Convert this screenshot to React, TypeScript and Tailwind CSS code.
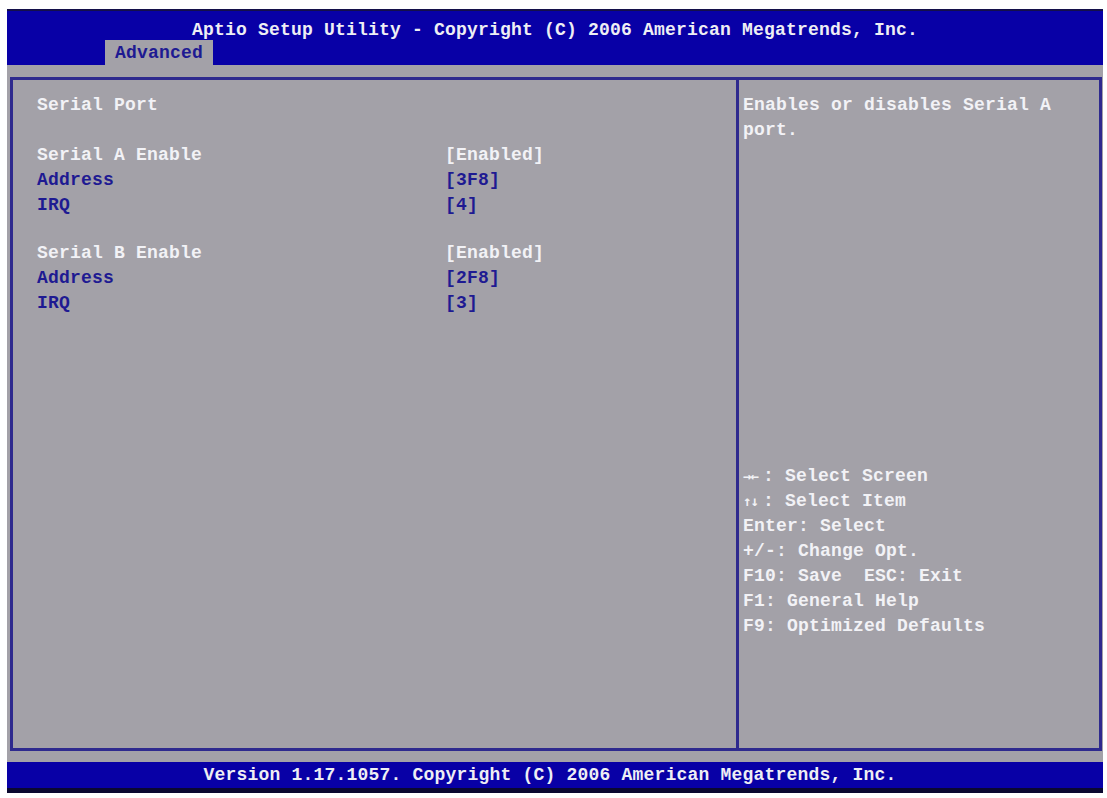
import React from 'react';

const rows = [
  { label: 'Serial A Enable', value: '[Enabled]', sub: false },
  { label: 'Address', value: '[3F8]', sub: true },
  { label: 'IRQ', value: '[4]', sub: true },
  null,
  { label: 'Serial B Enable', value: '[Enabled]', sub: false },
  { label: 'Address', value: '[2F8]', sub: true },
  { label: 'IRQ', value: '[3]', sub: true },
];

const keys = [
  { k: '\u2192\u2190', t: ': Select Screen' },
  { k: '\u2191\u2193', t: ': Select Item' },
  { k: '', t: 'Enter: Select' },
  { k: '', t: '+/-: Change Opt.' },
  { k: '', t: 'F10: Save  ESC: Exit' },
  { k: '', t: 'F1: General Help' },
  { k: '', t: 'F9: Optimized Defaults' },
];

const App: React.FC = () => {
  return (
    <div
      className="w-[1107px] h-[798px] bg-white pl-[7px] pt-[9px] text-[18px] font-bold tracking-[0.2px]"
      style={{ fontFamily: '"Liberation Mono", "DejaVu Sans Mono", monospace' }}
    >
      <div className="w-[1096px] h-[784px] flex flex-col bg-[#a3a1a8]">
        {/* header */}
        <div className="h-[56px] bg-[#0800a6] border-t-2 border-[#14104a] flex flex-col">
          <div className="h-[29px] flex items-end justify-center text-[#eeeef4] leading-[20px] whitespace-pre">
            Aptio Setup Utility - Copyright (C) 2006 American Megatrends, Inc.
          </div>
          <div className="flex-1 flex items-end pl-[98px]">
            <div className="w-[108px] h-[25px] bg-[#a3a1a8] text-[#1e1a92] flex items-center justify-center leading-none">
              Advanced
            </div>
          </div>
        </div>

        {/* body */}
        <div className="flex-1 pt-[12px] pb-[11px] pl-[3px] pr-[1px]">
          <div className="h-full flex border-[3px] border-[#2e2a8e]">
            <div className="w-[726px] border-r-[3px] border-[#2e2a8e] pl-[24px] pt-[13px] leading-[25px] text-[#f2f2f6]">
              <div>Serial Port</div>
              <div className="h-[25px]" />
              {rows.map((r, i) =>
                r ? (
                  <div key={i} className="flex">
                    <div className={`w-[408px] ${r.sub ? 'text-[#1e1a92]' : ''}`}>{r.label}</div>
                    <div className={r.sub ? 'text-[#1e1a92]' : ''}>{r.value}</div>
                  </div>
                ) : (
                  <div key={i} className="h-[23px]" />
                )
              )}
            </div>
            <div className="flex-1 flex flex-col justify-between pl-[4px] pt-[13px] pb-[109px] leading-[25px] text-[#f2f2f6]">
              <div>
                <div>Enables or disables Serial A</div>
                <div>port.</div>
              </div>
              <div className="whitespace-pre">
                {keys.map((row) => (
                  <div key={row.t}>
                    {row.k && (
                      <span className="inline-block w-[20px] tracking-[-1px] text-[14px]" style={{ fontFamily: '"DejaVu Sans Mono", monospace' }}>
                        {row.k}
                      </span>
                    )}
                    {row.t}
                  </div>
                ))}
              </div>
            </div>
          </div>
        </div>

        {/* footer */}
        <div className="h-[31px] bg-[#0800a6] border-b-[5px] border-[#0a0830] flex items-center justify-center text-[#eeeef4] leading-none whitespace-pre pr-[10px]">
          Version 1.17.1057. Copyright (C) 2006 American Megatrends, Inc.
        </div>
      </div>
    </div>
  );
};

export default App;
